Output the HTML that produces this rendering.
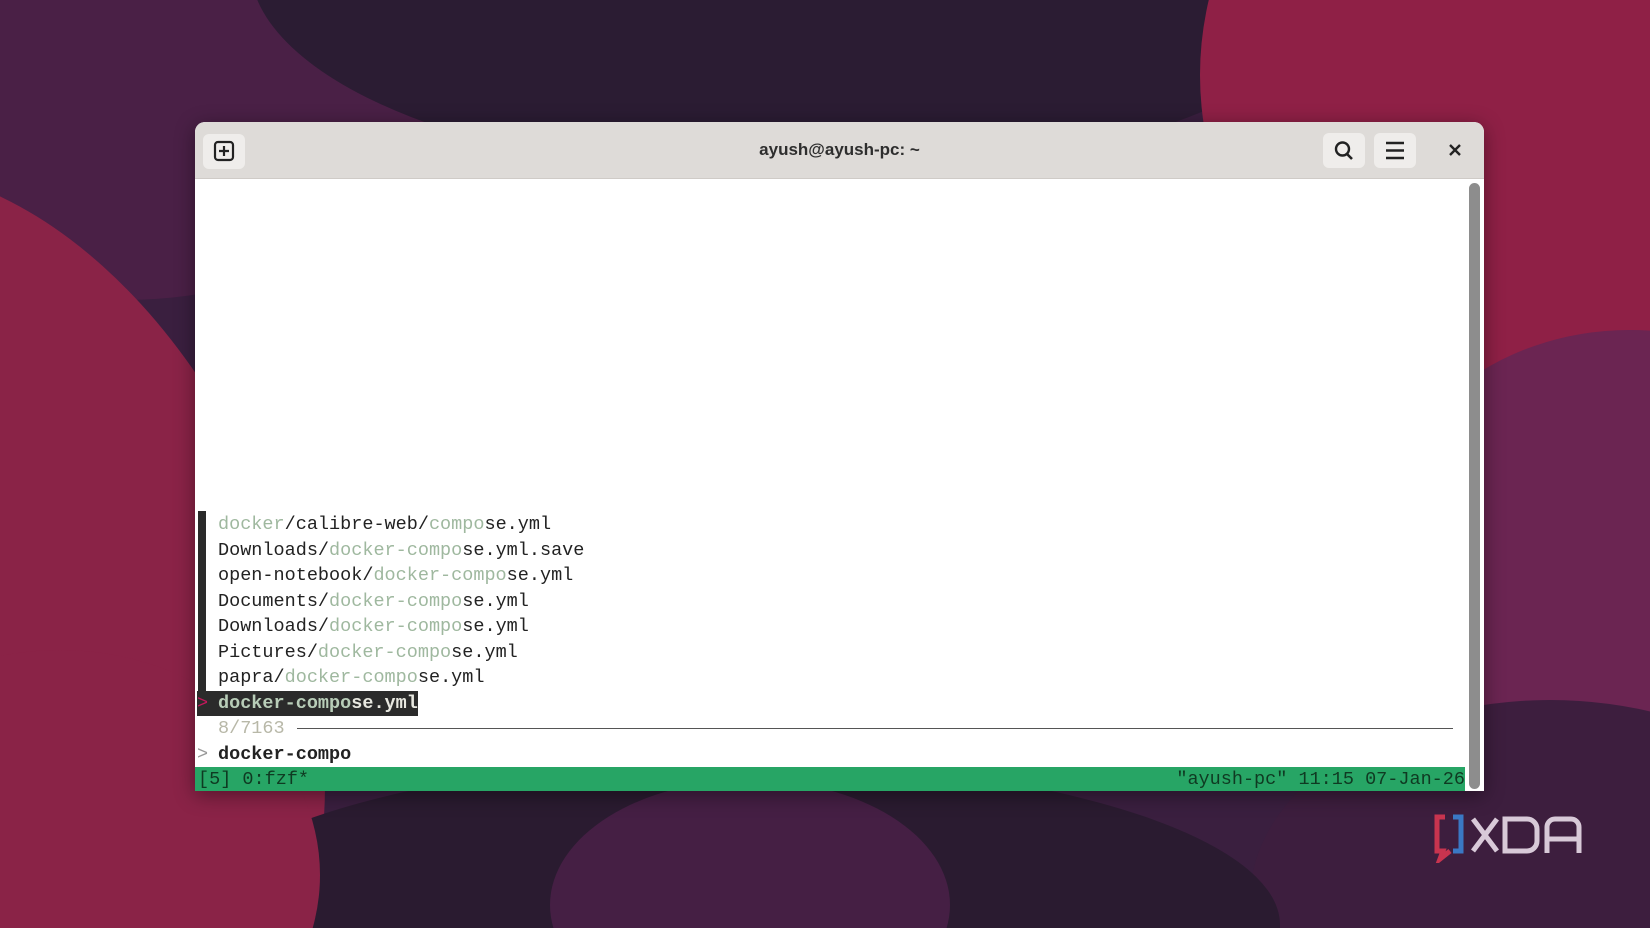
<!DOCTYPE html>
<html style="overflow:hidden;width:1650px;height:928px"><head><meta charset="utf-8"><style>
html,body{margin:0;padding:0}
body{width:1650px;height:928px;overflow:hidden;position:relative;font-family:"Liberation Sans",sans-serif}
#root{position:absolute;left:0;top:0;width:1650px;height:928px;overflow:hidden;background:#3a1f3f}
.bg{position:absolute;border-radius:50%}
.win{position:absolute;left:195px;top:122px;width:1289px;height:669px;background:#fff;border-radius:10px 10px 0 0;overflow:hidden;box-shadow:0 4px 20px rgba(0,0,0,.4)}
.tb{position:absolute;left:0;top:0;width:100%;height:56px;background:#dedbd8;border-bottom:1px solid #cfcbc7}
.btn{position:absolute;top:11px;width:42px;height:35px;background:#efedeb;border-radius:6px}
.title{position:absolute;left:0;width:100%;top:18px;text-align:center;font-size:17px;font-weight:bold;color:#2e2e2e}
.term{position:absolute;left:0;top:57px;width:100%;font-family:"Liberation Mono",monospace;font-size:18.5px;color:#222}
.l{position:absolute;left:23px;height:25.5px;line-height:25.5px;white-space:pre}
.g{color:#9fb89f}
</style></head><body><div id="root">
<div class="bg" style="left:-200px;top:-150px;width:650px;height:450px;background:#4a2046"></div>
<div class="bg" style="left:-350px;top:150px;width:650px;height:1000px;background:#8a2347;transform:rotate(-20deg)"></div>
<div class="bg" style="left:250px;top:-250px;width:1100px;height:430px;background:#2b1c33"></div>
<div class="bg" style="left:1200px;top:-250px;width:650px;height:650px;background:#8f2046"></div>
<div class="bg" style="left:1380px;top:330px;width:500px;height:420px;background:#6b2552"></div>
<div class="bg" style="left:1250px;top:700px;width:600px;height:400px;background:#3d1e3e"></div>
<div class="bg" style="left:180px;top:760px;width:1100px;height:330px;background:#2a1b30"></div>
<div class="bg" style="left:550px;top:780px;width:400px;height:250px;background:#451f44"></div>
<div class="bg" style="left:-200px;top:650px;width:520px;height:450px;background:#8a2347"></div>

<div class="win">
 <div class="tb">
  <div class="btn" style="left:8px;top:12px"><svg width="42" height="35" viewBox="0 0 42 35"><rect x="12" y="8" width="18" height="18" rx="3" fill="none" stroke="#222" stroke-width="2.2"/><path d="M21 12v10M16 17h10" stroke="#222" stroke-width="2.2"/></svg></div>
  <div class="title">ayush@ayush-pc: ~</div>
  <div class="btn" style="left:1128px"><svg width="42" height="35" viewBox="0 0 42 35"><circle cx="19.5" cy="16" r="6.5" fill="none" stroke="#222" stroke-width="2.4"/><path d="M24 21l5 5" stroke="#222" stroke-width="2.6"/></svg></div>
  <div class="btn" style="left:1179px"><svg width="42" height="35" viewBox="0 0 42 35"><path d="M12 10h18M12 17.5h18M12 25h18" stroke="#222" stroke-width="2.4"/></svg></div>
  <svg style="position:absolute;left:1252px;top:20px" width="16" height="16" viewBox="0 0 16 16"><path d="M3 3l10 10M13 3L3 13" stroke="#222" stroke-width="2.4"/></svg>
 </div>
 <div style="position:absolute;left:1274px;top:61px;width:11px;height:606px;background:#8d8d8d;border-radius:6px"></div>
 <div class="term">
  <div style="position:absolute;left:3px;top:332px;width:8px;height:205px;background:#2a2a2a"></div>
  <div style="position:absolute;left:2px;top:512px;width:221px;height:25px;background:#2b2b2b"></div>
  <div class="l" style="top:333px"><span class="g">docker</span>/calibre-web/<span class="g">compo</span>se.yml</div>
  <div class="l" style="top:358.5px">Downloads/<span class="g">docker-compo</span>se.yml.save</div>
  <div class="l" style="top:384px">open-notebook/<span class="g">docker-compo</span>se.yml</div>
  <div class="l" style="top:409.5px">Documents/<span class="g">docker-compo</span>se.yml</div>
  <div class="l" style="top:435px">Downloads/<span class="g">docker-compo</span>se.yml</div>
  <div class="l" style="top:460.5px">Pictures/<span class="g">docker-compo</span>se.yml</div>
  <div class="l" style="top:486px">papra/<span class="g">docker-compo</span>se.yml</div>
  <div class="l" style="top:511.5px;left:2px;color:#c2185b">&gt;</div>
  <div class="l" style="top:511.5px;color:#e8e8e0;font-weight:bold"><span style="color:#b8cdb8">docker-compo</span>se.yml</div>
  <div class="l" style="top:537px;color:#b8b8a8">8/7163</div>
  <div style="position:absolute;left:102px;top:549px;width:1156px;height:1px;background:#555"></div>
  <div class="l" style="top:562.5px;left:2px;color:#999">&gt;</div>
  <div class="l" style="top:562.5px;font-weight:bold">docker-compo</div>
  <div style="position:absolute;left:0;top:588px;width:1270px;height:25px;background:#27a565"></div>
  <div class="l" style="top:588px;left:3px;color:#0f3a22">[5] 0:fzf*</div>
  <div class="l" style="top:588px;left:auto;right:19px;color:#0f3a22">"ayush-pc" 11:15 07-Jan-26</div>
 </div>
</div>

<svg style="position:absolute;left:1433px;top:813px" width="160" height="50" viewBox="0 0 160 50">
<path d="M12 4H4v34h6l-3 8 10-8" fill="none" stroke="#c8344f" stroke-width="5"/>
<path d="M20 4h8v34h-8" fill="none" stroke="#3a78c4" stroke-width="5"/>
<path d="M40 6l24 32M64 6L40 38" stroke="#d8c9d8" stroke-width="5"/>
<path d="M72 6h22a10 10 0 0 1 10 10v12a10 10 0 0 1-10 10H72z" fill="none" stroke="#d8c9d8" stroke-width="5"/>
<path d="M114 40V14a8 8 0 0 1 8-8h16a8 8 0 0 1 8 8v26M114 26h32" fill="none" stroke="#d8c9d8" stroke-width="5"/>
</svg>
</div></body></html>
